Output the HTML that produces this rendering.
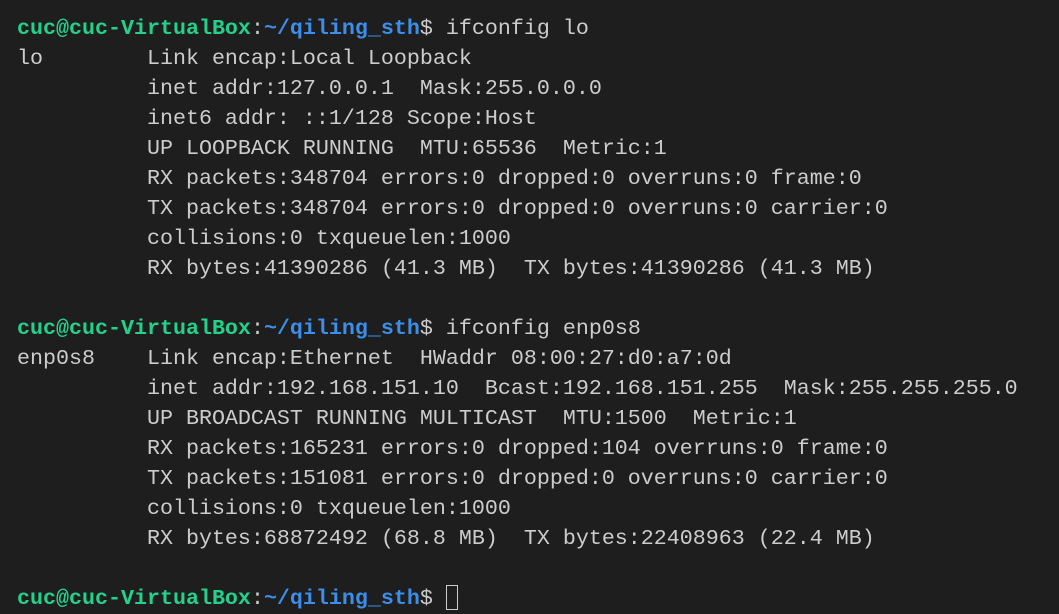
<!DOCTYPE html>
<html><head><meta charset="utf-8"><style>
html,body{margin:0;padding:0;background:#1e1e1e;width:1059px;height:614px;overflow:hidden}
pre{margin:0;padding:14px 0 0 17px;font-family:"Liberation Mono",monospace;font-size:21.67px;line-height:30px;color:#cccccc;white-space:pre}
.g{color:#23d18b;font-weight:bold}.b{color:#3b8eea;font-weight:bold}
.cur{display:inline-block;width:10px;height:25px;border:1.5px solid #cccccc;vertical-align:-6px;box-sizing:border-box;width:12px}
</style></head><body><pre><span class="g">cuc@cuc-VirtualBox</span>:<span class="b">~/qiling_sth</span>$ ifconfig lo
lo        Link encap:Local Loopback
          inet addr:127.0.0.1  Mask:255.0.0.0
          inet6 addr: ::1/128 Scope:Host
          UP LOOPBACK RUNNING  MTU:65536  Metric:1
          RX packets:348704 errors:0 dropped:0 overruns:0 frame:0
          TX packets:348704 errors:0 dropped:0 overruns:0 carrier:0
          collisions:0 txqueuelen:1000
          RX bytes:41390286 (41.3 MB)  TX bytes:41390286 (41.3 MB)

<span class="g">cuc@cuc-VirtualBox</span>:<span class="b">~/qiling_sth</span>$ ifconfig enp0s8
enp0s8    Link encap:Ethernet  HWaddr 08:00:27:d0:a7:0d
          inet addr:192.168.151.10  Bcast:192.168.151.255  Mask:255.255.255.0
          UP BROADCAST RUNNING MULTICAST  MTU:1500  Metric:1
          RX packets:165231 errors:0 dropped:104 overruns:0 frame:0
          TX packets:151081 errors:0 dropped:0 overruns:0 carrier:0
          collisions:0 txqueuelen:1000
          RX bytes:68872492 (68.8 MB)  TX bytes:22408963 (22.4 MB)

<span class="g">cuc@cuc-VirtualBox</span>:<span class="b">~/qiling_sth</span>$ <span class="cur"></span></pre></body></html>
